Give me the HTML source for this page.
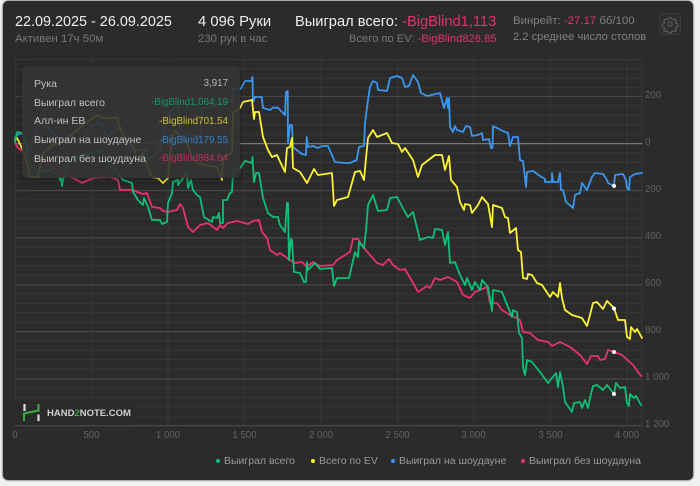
<!DOCTYPE html>
<html lang="ru"><head><meta charset="utf-8"><title>Hand2Note</title>
<style>
html,body{margin:0;padding:0;width:700px;height:486px;overflow:hidden;background:#f1f1f1;font-family:"Liberation Sans",sans-serif}
#p{position:absolute;left:3px;top:1px;width:690px;height:479px;background:#2b2b2b;border-radius:5px;box-shadow:0 0 2px #222}
.t{position:absolute;white-space:nowrap;line-height:1}
svg{position:absolute;left:0;top:0}
#tip{position:absolute;left:22px;top:66px;width:218px;height:112px;background:rgba(52,52,52,.91);border-radius:5px;box-shadow:0 4px 10px rgba(0,0,0,.25)}
.l{color:#c0c0c0;font-size:10.5px;left:34px}
.r{font-size:9.75px;right:472px}
.a{color:#626262;font-size:9.7px}
.b{transform:translateX(-50%)}
.g{color:#999;font-size:10.5px;top:456px}
</style></head><body>
<div id="p"></div>
<svg width="700" height="486" viewBox="0 0 700 486" fill="none">
<path stroke="#373737" stroke-width="1" d="M15 59.5H642M15 68.9H642M15 78.3H642M15 87.7H642M15 105.9H642M15 115.3H642M15 124.7H642M15 134.1H642M15 152.9H642M15 162.3H642M15 171.7H642M15 181.1H642M15 199.9H642M15 209.3H642M15 218.7H642M15 228.1H642M15 246.9H642M15 256.3H642M15 265.7H642M15 275.1H642M15 293.9H642M15 303.3H642M15 312.7H642M15 322.1H642M15 340.9H642M15 350.3H642M15 359.7H642M15 369.1H642M15 387.9H642M15 397.3H642M15 406.7H642M15 416.1H642M15.5 59V426M91.5 59V426M168 59V426M244.5 59V426M321 59V426M397.5 59V426M473.5 59V426M550.5 59V426M627 59V426M642 59V426"/>
<path stroke="#464646" stroke-width="1.3" d="M15 96.5H642M15 190.5H642M15 237.8H642M15 284.8H642M15 331.7H642M15 378.8H642M15 425.7H642"/>
<path stroke="#787878" stroke-width="1.2" d="M15 143.6H642"/>
<g stroke-width="1.8" stroke-linejoin="round" stroke-linecap="round">
<polyline stroke="#3a96ee" points="15,138 17,135 22,133 27,145 30,150 34,135 38,125 48,127 53,133 60,140 77,140 84,137 90,127 100,122 104,130 107,137 113,132 120,128 125,140 130,150 147,150 148,160 155,155 160,150 163,133 168,118 173,107 178,107 180,130 190,135 200,137 202,108 210,108 220,103 232,102 233,88 240.7,89 245,81 251.7,81 252.5,77 253,102 255,97 261.7,97 263,108 270,110 272.7,107.7 278,107.7 285,115 286,92 287.7,91 288,143 290,125 292,125 293,147 301.7,154 306,155 306.7,137 308,147 313,146 318,148 322,146 328,146 331,153 335,162 345,163 350,163 356.7,160 359,147 364,146 365,123 368,100 370,87 373,81 377,83 378,90 387,91 390,78 397,76 402,78 405,87 409,86 413,75 418,82 421,93 427,96 440,93 444,108 447,98 448,108 449,98 450,127 453,132 455,126 457,130 463,132 466,126 470,127 472,136 478,135 482,133 483,140 489,139 491,148 492.5,148 493,126 503,131 508,133 510,146 513,137 518,137 520,160 523,161 526,187 527,172 533,171 540,176 545,179 545,182 552,182 552,173 553,182 558,182 560,173 561,190 563,190 566,202 573,208 575,195 580,193 582,183 587,190 590,182 592,177 595,173 603,174 607,180 608,183 614,186 615,175 622,174 623,174 626,180 627,188 629,190 630,177 635,174 642,173"/>
<polyline stroke="#fbf236" points="15,140 17,138 19,142 25,155 28,167 30,177 38,177 43,153 53,145 65,140 77,130 90,120 97,115 103,118 117,118 122,133 130,143 135,150 137,160 143,153 148,168 152,177 158,178 163,183 168,178 172,137 175,130 187,143 192,158 197,163 205,165 217,167 222,180 223,157 232,153 233,113 240,108 243,102 252,100 254,119 255,112 259,112 263,137 268,150 272,157 277,155 283,168 285,172 287,148 290,147 292,138 293,168 300,172 307,183 314,169 318,175 332,173 334,206 337,200 348,197 355,172 360,171 364,180 366,158 368,138 373,130 377,137 387,133 392,143 398,144 402,152 405,148 413,160 418,177 422,165 435,155 442,155 445,170 449,156 451,180 457,187 460,202 464,210 465,204 470,205 472,213 478,205 482,197 488,204 492,227 493,205 502,208 505,217 508,218 510,233 516,228 518,250 521,252 523,278 527,279 528,274 532,275 537,283 542,285 550,297 553,292 558,297 560,283 562,298 565,310 572,315 582,318 587,326 590,315 593,303 597,302 603,309 607,301 614,308 618,320 625,320 627,337 630,339 631,327 635,332 637,329 642,338"/>
<polyline stroke="#e8326e" points="15,143 18,148 25,153 35,158 50,165 60,172 73,178 77,180 82,183 93,178 110,177 118,180 120,190 132,190 143,194 147,193 152,207 160,208 163,211 168,212 177,210 180,204 183,208 188,227 193,232 200,225 208,223 217,230 220,225 223,228 228,223 237,221 248,224 253,221 259,220 262,232 267,238 270,250 277,255 280,253 290,260 295,263 302,262 307,267 313,262 320,266 333,265 337,260 350,252 353,239 358,239 363,247 370,255 377,263 383,265 389,259 393,265 400,270 405,269 413,283 418,292 427,286 430,288 435,278 440,280 448,277 457,282 463,295 470,298 475,292 487,287 490,303 497,303 502,310 510,315 520,320 523,332 530,333 538,340 548,342 552,346 560,342 570,347 580,355 587,364 591,356 598,356 600,360 605,359 608,350 614,352 622,355 633,365 641,376"/>
<polyline stroke="#0fbe78" points="15,142 17,132 24,133 27,150 30,165 38,172 50,170 58,175 60,180 61,177 62,186 63,180 70,160 85,155 100,150 110,165 118,172 123,180 132,183 133,192 138,200 143,205 144,198 148,207 152,220 160,220 162,224 167,222 168,203 172,193 173,182 178,180 178,185 187,173 188,188 191,180 193,190 197,195 200,197 204,217 212,222 213,217 217,218 219,213 220,223 223,223 223,200 227,200 230,193 232,192 233,170 240,168 245,161 252,163 252.5,157 254,182 256,173 259,173 263,198 268,213 273,217 278,217 280,225 285,232 287,203 288,203 289,260 291,239 292,240 294,272 300,273 304,282 306,282 307,262 308,270 315,263 320,269 332,268 334,286 337,278 349,278 355,252 358,257 359,242 364,248 366,230 368,205 373,195 378,211 387,210 390,198 397,197 405,212 408,217 413,212 420,240 428,237 433,238 435,229 442,230 445,245 448,232 450,263 455,262 460,275 465,285 467,278 472,290 475,282 480,290 482,280 488,287 492,311 493,290 502,292 508,307 512,317 513,310 517,312 519,333 522,338 523,367 525,375 527,360 532,362 540,372 548,383 552,378 556,373 558,387 560,372 563,387 565,402 572,412 574,403 580,402 582,408 585,400 588,408 590,398 593,386 597,385 603,390 607,385 614,394 616,383 620,388 625,387 627,403 629,406 630,394 634,398 636,396 641,405"/>
</g>
<g fill="#fff"><circle cx="614" cy="186" r="2"/><circle cx="614" cy="308.5" r="2"/><circle cx="614" cy="352" r="2"/><circle cx="614" cy="394" r="2"/></g>
<rect x="15" y="400" width="120" height="25" fill="#2a2a2a"/>
<path d="M24.5 404V411M38.5 414.5V421" stroke="#ddd" stroke-width="2.2"/>
<path d="M24 421V413.5L38.5 410.5V404" stroke="#3aa63e" stroke-width="2.2"/>
<rect x="659.5" y="13.5" width="21" height="21" rx="3" stroke="#3a3a3a" fill="#2e2e2e"/>
<g stroke="#5c5c5c" stroke-width="1.1"><circle cx="670" cy="24" r="2.2"/><path d="M668.7 17.5h2.6l.4 1.7 1.4.6 1.5-.9 1.8 1.8-.9 1.5.6 1.4 1.7.4v2.6l-1.7.4-.6 1.4.9 1.5-1.8 1.8-1.5-.9-1.4.6-.4 1.7h-2.6l-.4-1.7-1.4-.6-1.5.9-1.8-1.8.9-1.5-.6-1.4-1.7-.4v-2.6l1.7-.4.6-1.4-.9-1.5 1.8-1.8 1.5.9 1.4-.6z"/></g>
<g><circle cx="218" cy="461" r="2" fill="#0fbe78"/><circle cx="313" cy="461" r="2" fill="#fbf236"/><circle cx="393" cy="461" r="2" fill="#3a96ee"/><circle cx="523" cy="461" r="2" fill="#e8326e"/></g>
</svg>

<div class="t" style="left:15px;top:15px;font-size:14.4px;color:#eee">22.09.2025 - 26.09.2025</div>
<div class="t" style="left:15px;top:33.5px;font-size:11.4px;color:#777">Активен 17ч 50м</div>
<div class="t" style="left:198px;top:15px;font-size:14.8px;color:#eee">4 096 Руки</div>
<div class="t" style="left:198px;top:33.5px;font-size:11.4px;color:#777">230 рук в час</div>
<div class="t" style="left:295px;top:15px;font-size:14.65px;color:#eee">Выиграл всего: <span style="color:#e0336d">-BigBlind1,113</span></div>
<div class="t" style="left:349px;top:33.5px;font-size:11.2px;color:#777">Всего по EV: <span style="color:#e0336d">-BigBlind826.85</span></div>
<div class="t" style="left:513px;top:16px;font-size:11.4px;color:#808080">Винрейт: <span style="color:#e0336d">-27.17</span> бб/100</div>
<div class="t" style="left:513px;top:32px;font-size:11.15px;color:#808080">2.2 среднее число столов</div>

<div class="t a" style="left:645px;top:91px">200</div>
<div class="t a" style="left:645px;top:138px">0</div>
<div class="t a" style="left:645px;top:185px">200</div>
<div class="t a" style="left:645px;top:232px">400</div>
<div class="t a" style="left:645px;top:279px">600</div>
<div class="t a" style="left:645px;top:326px">800</div>
<div class="t a" style="left:645px;top:373px">1 000</div>
<div class="t a" style="left:645px;top:420px">1 200</div>
<div class="t a b" style="left:15px;top:430.5px">0</div>
<div class="t a b" style="left:91.5px;top:430.5px">500</div>
<div class="t a b" style="left:168px;top:430.5px">1 000</div>
<div class="t a b" style="left:244.5px;top:430.5px">1 500</div>
<div class="t a b" style="left:321px;top:430.5px">2 000</div>
<div class="t a b" style="left:397.5px;top:430.5px">2 500</div>
<div class="t a b" style="left:473.5px;top:430.5px">3 000</div>
<div class="t a b" style="left:550.5px;top:430.5px">3 500</div>
<div class="t a b" style="left:627px;top:430.5px">4 000</div>

<div class="t" style="left:47px;top:408.5px;font-size:9.5px;font-weight:bold;color:#cfcfcf">HAND<span style="color:#3aa63e">2</span>NOTE.COM</div>

<div class="t g" style="left:224px">Выиграл всего</div>
<div class="t g" style="left:319px">Всего по EV</div>
<div class="t g" style="left:399px">Выиграл на шоудауне</div>
<div class="t g" style="left:529px">Выиграл без шоудауна</div>

<div id="tip"></div>
<div class="t l" style="top:78.5px">Рука</div>
<div class="t l" style="top:97.5px">Выиграл всего</div>
<div class="t l" style="top:116px">Алл-ин ЕВ</div>
<div class="t l" style="top:135px">Выиграл на шоудауне</div>
<div class="t l" style="top:153.5px">Выиграл без шоудауна</div>
<div class="t r" style="top:79px;color:#b5b5b5">3,917</div>
<div class="t r" style="top:98px;color:#0d9a64">-BigBlind1,064.19</div>
<div class="t r" style="top:116.5px;color:#c8c233">-BigBlind701.54</div>
<div class="t r" style="top:135.5px;color:#327fc6">-BigBlind179.55</div>
<div class="t r" style="top:154px;color:#bf2c5e">-BigBlind884.64</div>
</body></html>
